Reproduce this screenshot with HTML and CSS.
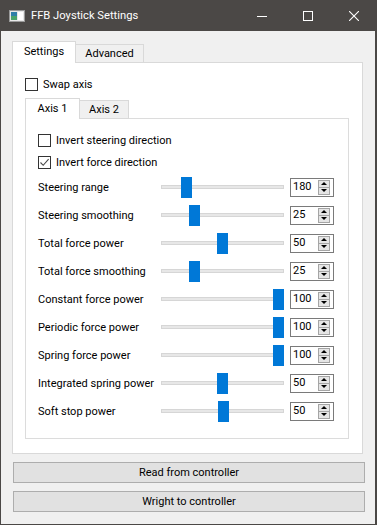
FILE: index.html
```html
<!DOCTYPE html>
<html>
<head>
<meta charset="utf-8">
<title>FFB Joystick Settings</title>
<link rel="stylesheet" href="styles.css">
</head>
<body>
<div class="window">
  <div class="titlebar">
    <svg class="app-icon" width="16" height="12" viewBox="0 0 16 12">
      <rect x="0.5" y="0.5" width="15" height="11" fill="#e8e8e8" stroke="#9a9a9a"/>
      <rect x="2" y="2" width="6" height="8" fill="#2f7fa8"/>
      <rect x="2" y="6" width="6" height="4" fill="#4aa36a"/>
      <rect x="9" y="2" width="5" height="8" fill="#ffffff"/>
    </svg>
    <span class="title">FFB Joystick Settings</span>
    <div class="controls">
      <div class="ctl"><svg width="10" height="10" viewBox="0 0 10 10"><line x1="0" y1="5.5" x2="10" y2="5.5" stroke="#fff" stroke-width="1"/></svg></div>
      <div class="ctl"><svg width="10" height="10" viewBox="0 0 10 10"><rect x="0.5" y="0.5" width="9" height="9" fill="none" stroke="#fff" stroke-width="1"/></svg></div>
      <div class="ctl"><svg width="10" height="10" viewBox="0 0 10 10"><path d="M0 0 L10 10 M10 0 L0 10" stroke="#fff" stroke-width="1.1"/></svg></div>
    </div>
  </div>
  <div class="client">
    <div class="tabs outer-tabs">
      <div class="tab active t-settings">Settings</div>
      <div class="tab t-advanced">Advanced</div>
    </div>
    <div class="pane outer-pane">
      <div class="check-row swap-row">
        <span class="box"></span><span>Swap axis</span>
      </div>
      <div class="tabs inner-tabs">
        <div class="tab active t-axis1">Axis 1</div>
        <div class="tab t-axis2">Axis 2</div>
      </div>
      <div class="pane inner-pane">
        <div class="check-row row-a">
          <span class="box"></span><span>Invert steering direction</span>
        </div>
        <div class="check-row row-b">
          <span class="box checked"><svg width="11" height="11" viewBox="0 0 11 11"><path d="M1.5 5.5 L4.2 8.3 L9.6 2.2" fill="none" stroke="#4a4a4a" stroke-width="1.1"/></svg></span><span>Invert force direction</span>
        </div>

        <div class="srow"><span class="lbl">Steering range</span><div class="slider"><div class="groove"></div><div class="handle" style="left:20px"></div></div><div class="spin"><span class="val">180</span><div class="sbtns"><div class="sb up"></div><div class="sb down"></div></div></div></div>
        <div class="srow"><span class="lbl">Steering smoothing</span><div class="slider"><div class="groove"></div><div class="handle" style="left:28px"></div></div><div class="spin"><span class="val">25</span><div class="sbtns"><div class="sb up"></div><div class="sb down"></div></div></div></div>
        <div class="srow"><span class="lbl">Total force power</span><div class="slider"><div class="groove"></div><div class="handle" style="left:56px"></div></div><div class="spin"><span class="val">50</span><div class="sbtns"><div class="sb up"></div><div class="sb down"></div></div></div></div>
        <div class="srow"><span class="lbl">Total force smoothing</span><div class="slider"><div class="groove"></div><div class="handle" style="left:28px"></div></div><div class="spin"><span class="val">25</span><div class="sbtns"><div class="sb up"></div><div class="sb down"></div></div></div></div>
        <div class="srow"><span class="lbl">Constant force power</span><div class="slider"><div class="groove"></div><div class="handle" style="left:112px"></div></div><div class="spin"><span class="val">100</span><div class="sbtns"><div class="sb up"></div><div class="sb down"></div></div></div></div>
        <div class="srow"><span class="lbl">Periodic force power</span><div class="slider"><div class="groove"></div><div class="handle" style="left:112px"></div></div><div class="spin"><span class="val">100</span><div class="sbtns"><div class="sb up"></div><div class="sb down"></div></div></div></div>
        <div class="srow"><span class="lbl">Spring force power</span><div class="slider"><div class="groove"></div><div class="handle" style="left:112px"></div></div><div class="spin"><span class="val">100</span><div class="sbtns"><div class="sb up"></div><div class="sb down"></div></div></div></div>
        <div class="srow"><span class="lbl">Integrated spring power</span><div class="slider"><div class="groove"></div><div class="handle" style="left:56px"></div></div><div class="spin"><span class="val">50</span><div class="sbtns"><div class="sb up"></div><div class="sb down"></div></div></div></div>
        <div class="srow"><span class="lbl">Soft stop power</span><div class="slider"><div class="groove"></div><div class="handle" style="left:57px"></div></div><div class="spin"><span class="val">50</span><div class="sbtns"><div class="sb up"></div><div class="sb down"></div></div></div></div>
      </div>
    </div>
    <div class="btn btn-read">Read from controller</div>
    <div class="btn btn-write">Wright to controller</div>
  </div>
</div>
</body>
</html>
```

FILE: styles.css
```css
* { box-sizing: border-box; }
html, body { margin: 0; padding: 0; }
body {
  width: 377px;
  height: 525px;
  overflow: hidden;
  font-family: Roboto, "Noto Sans", sans-serif;
  font-size: 11px;
  color: #000;
  background: #f0f0f0;
}
.window {
  width: 377px;
  height: 525px;
  display: flex;
  flex-direction: column;
}
.titlebar {
  height: 31px;
  flex: none;
  background: #4b4846;
  color: #fff;
  display: flex;
  align-items: center;
}
.app-icon { margin-left: 9px; flex: none; }
.title { margin-left: 6px; font-size: 11.2px; line-height: 16px; }
.controls { margin-left: auto; display: flex; height: 31px; }
.ctl { width: 46px; height: 31px; display: flex; align-items: center; justify-content: center; }
.ctl svg { display: block; }

.client {
  flex: 1;
  background: #f0f0f0;
  border-left: 1px solid #4b4846;
  border-right: 2px solid #4b4846;
  border-bottom: 1px solid #4b4846;
  padding: 10px 0 0 11px;
  display: flex;
  flex-direction: column;
  align-items: flex-start;
}

.tabs {
  display: flex;
  align-items: flex-end;
  position: relative;
  z-index: 1;
  margin-bottom: -1px;
}
.tab {
  border: 1px solid #d9d9d9;
  background: #f0f0f0;
  display: flex;
  align-items: center;
  justify-content: center;
  line-height: 14px;
}
.tab.active {
  background: #fff;
  border-bottom: none;
}
.tab + .tab { border-left: none; }

.outer-tabs { height: 22px; }
.t-settings { width: 64px; height: 22px; padding-bottom: 1px; }
.t-advanced { width: 68px; height: 19px; }

.pane {
  border: 1px solid #d9d9d9;
  background: #fff;
}
.outer-pane {
  width: 351px;
  height: 392px;
  padding: 0 13px 0 12px;
  flex: none;
}

.check-row {
  display: flex;
  align-items: center;
}
.box {
  width: 13px;
  height: 13px;
  border: 1px solid #333;
  background: #fff;
  flex: none;
  margin-right: 5px;
  display: flex;
  align-items: center;
  justify-content: center;
}
.box svg { display: block; }
.swap-row { margin-top: 10px; height: 22px; }

.inner-tabs { margin-top: 3px; height: 21px; }
.t-axis1 { width: 55px; height: 21px; padding-bottom: 1px; }
.t-axis2 { width: 49px; height: 19px; }

.inner-pane {
  width: 324px;
  height: 321px;
  padding: 10px 0 0 12px;
  border-color: #dcdcdc;
}
.row-a { height: 23px; }
.row-b { height: 21px; }

.srow {
  height: 28px;
  display: flex;
  align-items: center;
}
.lbl { width: 123px; flex: none; white-space: nowrap; }
.slider {
  width: 123px;
  height: 21px;
  position: relative;
  flex: none;
  display: flex;
  align-items: center;
}
.groove {
  width: 100%;
  height: 4px;
  background: #e7e7e7;
  border: 1px solid #d6d6d6;
}
.handle {
  position: absolute;
  top: 0;
  width: 11px;
  height: 21px;
  background: #0078d7;
}
.spin {
  margin-left: 6px;
  width: 44px;
  height: 19px;
  border: 1px solid #7a7a7a;
  background: #fff;
  display: flex;
  align-items: center;
  flex: none;
}
.val { padding-left: 2px; flex: 1; line-height: 14px; }
.sbtns {
  width: 12px;
  height: 15px;
  margin-right: 3px;
  display: flex;
  flex-direction: column;
  border: 1px solid #a5a5a5;
  background: #e5e5e5;
}
.sb {
  flex: 1;
  display: flex;
  align-items: center;
  justify-content: center;
}
.sb.up { border-bottom: 1px solid #a5a5a5; }
.sb.up::before {
  content: "";
  border-left: 3px solid transparent;
  border-right: 3px solid transparent;
  border-bottom: 3px solid #000;
}
.sb.down::before {
  content: "";
  border-left: 3px solid transparent;
  border-right: 3px solid transparent;
  border-top: 3px solid #000;
}

.btn {
  width: 352px;
  height: 21px;
  margin-left: 1px;
  background: #e1e1e1;
  border: 1px solid #adadad;
  display: flex;
  align-items: center;
  justify-content: center;
  line-height: 14px;
  flex: none;
}
.btn-read { margin-top: 8px; }
.btn-write { margin-top: 8px; }
```
